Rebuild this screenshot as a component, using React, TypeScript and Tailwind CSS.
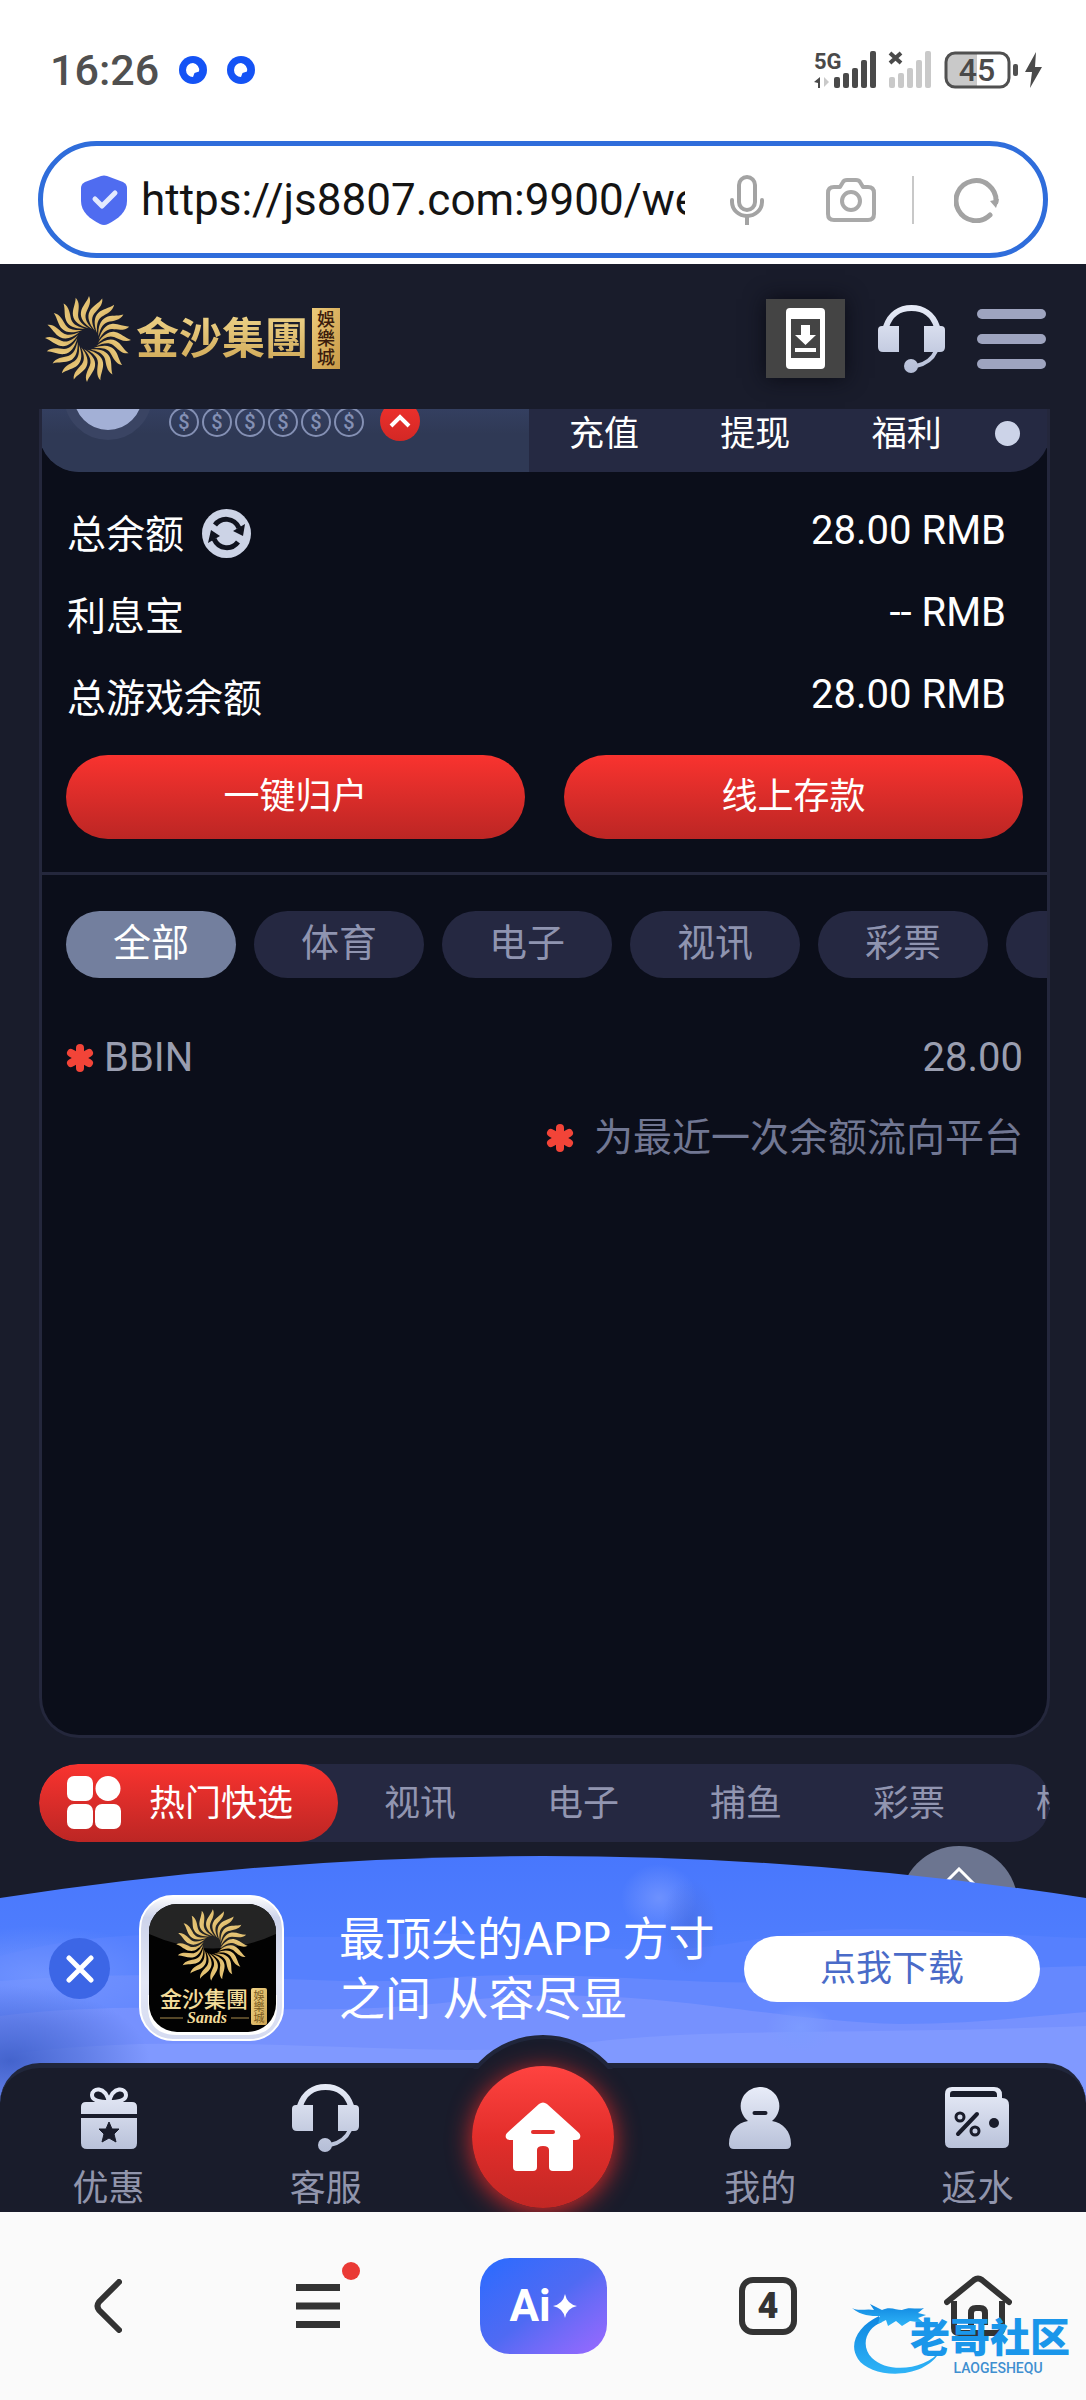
import { useState } from "react";

const CATEGORIES = ["全部", "体育", "电子", "视讯", "彩票", "棋牌"];

const QUICK_TABS = ["视讯", "电子", "捕鱼", "彩票", "棋牌"];

const BALANCES = [
    { label: "总余额", value: "28.00 RMB", refresh: true },
    { label: "利息宝", value: "-- RMB", refresh: false },
    { label: "总游戏余额", value: "28.00 RMB", refresh: false },
];

const SUN_RAYS = Array.from({ length: 20 }, (_, i) => i * 18);

// shared silver gradient for the site icons
function SilverDefs() {
    return (
        <svg className="absolute h-0 w-0" aria-hidden="true">
            <defs>
                <linearGradient
                    id="silver"
                    gradientUnits="userSpaceOnUse"
                    x1="0"
                    y1="0"
                    x2="0"
                    y2="68"
                >
                    <stop offset="0" stopColor="#e8ecf8" />
                    <stop offset="1" stopColor="#b4bdd6" />
                </linearGradient>
                <linearGradient id="gold" x1="0" y1="0" x2="1" y2="1">
                    <stop offset="0" stopColor="#f0d488" />
                    <stop offset="1" stopColor="#cfa450" />
                </linearGradient>
            </defs>
        </svg>
    );
}

function SunRays() {
    return (
        <g fill="url(#gold)">
            {SUN_RAYS.map((deg) => (
                <path
                    key={deg}
                    transform={`rotate(${deg})`}
                    d="M1 -43 C-1 -37 -6 -33 -7 -27 C-8 -21 -4 -15 4 -10 C0 -15 -4 -20 -2 -26 C0 -31 4 -37 1 -43 Z"
                />
            ))}
        </g>
    );
}

function HeadsetIcon() {
    return (
        <svg viewBox="0 0 67 68" className="h-[68px] w-[67px]">
            <path
                d="M8 22 C12 9 22 3 33.500 3 C45 3 55 9 59 22"
                fill="none"
                stroke="url(#silver)"
                strokeWidth="6"
            />
            <path
                d="M4 21 H21 V47 H5 Q0 47 0 42 V25 Q0 21 4 21 Z"
                fill="url(#silver)"
            />
            <path
                d="M46 21 H63 Q67 21 67 25 V42 Q67 47 62 47 H46 Z"
                fill="url(#silver)"
            />
            <path
                d="M58 46 C54 55 48 59 38 61"
                fill="none"
                stroke="url(#silver)"
                strokeWidth="4"
            />
            <circle cx="33" cy="61" r="7" fill="url(#silver)" />
        </svg>
    );
}

function GiftIcon() {
    return (
        <svg viewBox="0 0 56 62" className="h-[62px] w-14">
            <path
                d="M28 15 C24 15 11 15 11 8 C11 1 24 -2 28 15 C32 -2 45 1 45 8 C45 15 32 15 28 15 Z"
                fill="none"
                stroke="url(#silver)"
                strokeWidth="4"
            />
            <path
                d="M5 15 H51 Q56 15 56 20 V27 H0 V20 Q0 15 5 15 Z"
                fill="url(#silver)"
            />
            <path
                d="M0 31 H56 V56 Q56 62 50 62 H6 Q0 62 0 56 Z"
                fill="url(#silver)"
            />
            <path
                d="M28 35 L31 42 L38 42 L33 47 L35 55 L28 51 L21 55 L23 47 L18 42 L25 42 Z"
                fill="#191c2b"
                stroke="#191c2b"
                strokeLinejoin="round"
            />
        </svg>
    );
}

function UserIcon() {
    return (
        <svg viewBox="0 0 62 62" className="h-[62px] w-[62px]">
            <path
                d="M31 0 A19 19 0 0 1 43 34 C54 36 62 44 62 57 Q62 62 57 62 H5 Q0 62 0 57 C0 44 8 36 19 34 A19 19 0 0 1 31 0 Z"
                fill="url(#silver)"
            />
            <path
                d="M25.500 26 H36.500"
                stroke="#191c2b"
                strokeWidth="4"
                strokeLinecap="round"
            />
        </svg>
    );
}

function WalletIcon() {
    return (
        <svg viewBox="0 0 64 61" className="h-[61px] w-16">
            <path
                d="M7 0 H49 Q57 0 57 8 V11 Q64 11 64 18 V55 Q64 61 58 61 H6 Q0 61 0 55 V7 Q0 0 7 0 Z"
                fill="url(#silver)"
            />
            <path d="M8 4 H48 Q52 4 52 8 V10 H5 V7 Q5 4 8 4 Z" fill="#191c2b" />
            <g fill="none" stroke="#191c2b" strokeWidth="4" strokeLinecap="round">
                <path d="M32 27 L13 47" />
                <circle cx="15" cy="30" r="4" strokeWidth="3" />
                <circle cx="30" cy="44" r="4" strokeWidth="3" />
            </g>
            <circle cx="49" cy="36" r="5" fill="#191c2b" />
        </svg>
    );
}

function StarMark() {
    return (
        <svg viewBox="0 0 28 28" className="h-7 w-7" aria-hidden="true">
            <g stroke="#f24438" strokeWidth="8" strokeLinecap="round">
                <path d="M14 4 V24" />
                <path d="M5 9 L23 19" />
                <path d="M23 9 L5 19" />
            </g>
        </svg>
    );
}

function StatusBar() {
    return (
        <div className="flex h-[139px] items-center justify-between pr-11 pl-[50px]">
            <div className="flex items-center gap-5">
                <span className="text-[43px] leading-[48px] font-medium text-[#505050]">
                    16:26
                </span>
                {[0, 1].map((item) => (
                    <svg key={item} viewBox="0 0 28 28" className="h-7 w-7">
                        <circle cx="14" cy="14" r="14" fill="#1453f5" />
                        <path
                            d="M14 7 A7 7 0 1 0 14 21 L15.500 17 L20 15.500 A7 7 0 0 0 14 7 Z"
                            fill="#fff"
                        />
                    </svg>
                ))}
            </div>

            <div className="flex items-center gap-3">
                <svg viewBox="0 0 62 38" className="h-[38px] w-[62px] overflow-visible">
                    <text
                        x="0"
                        y="18"
                        fontSize="22"
                        fontWeight="700"
                        fill="#4a4a4a"
                    >
                        5G
                    </text>
                    <path d="M0 31 L6 26 V37 H4 V32 Z" fill="#4a4a4a" />
                    <path d="M10 26 L15 31 L10 36 Z" fill="#c9c9c9" />
                    <g fill="#4a4a4a">
                        <rect x="20" y="26" width="6" height="11" rx="2" />
                        <rect x="29" y="22" width="6" height="15" rx="2" />
                        <rect x="38" y="17" width="6" height="20" rx="2" />
                        <rect x="47" y="9" width="6" height="28" rx="2" />
                        <rect x="56" y="0" width="6" height="37" rx="2" />
                    </g>
                </svg>
                <svg viewBox="0 0 44 38" className="h-[38px] w-11">
                    <path
                        d="M2 2 L13 12 M13 2 L2 12"
                        stroke="#4a4a4a"
                        strokeWidth="4"
                    />
                    <g fill="#c9c9c9">
                        <rect x="1" y="26" width="6" height="11" rx="2" />
                        <rect x="10" y="22" width="6" height="15" rx="2" />
                        <rect x="19" y="17" width="6" height="20" rx="2" />
                        <rect x="28" y="9" width="6" height="28" rx="2" />
                        <rect x="37" y="0" width="6" height="37" rx="2" />
                    </g>
                </svg>
                <svg viewBox="0 0 98 38" className="h-[38px] w-[98px]">
                    <path d="M12 2 H33 V36 H12 Q2 36 2 26 V12 Q2 2 12 2 Z" fill="#c9c9c9" />
                    <rect
                        x="2"
                        y="2"
                        width="63"
                        height="34"
                        rx="9"
                        fill="none"
                        stroke="#505050"
                        strokeWidth="3"
                    />
                    <text
                        x="33"
                        y="30"
                        textAnchor="middle"
                        fontSize="32"
                        fontWeight="500"
                        fill="#4a4a4a"
                    >
                        45
                    </text>
                    <rect x="69" y="13" width="5" height="12" rx="2" fill="#505050" />
                    <path d="M92 1 L81 21 H88 L86 37 L98 16 H91 Z" fill="#4a4a4a" />
                </svg>
            </div>
        </div>
    );
}

function AddressBar() {
    return (
        <div className="px-[38px] pt-0.5 pb-1.5">
            <div className="flex h-[117px] items-center rounded-full border-5 border-[#2f6ddb] pr-[43px] pl-[38px]">
                <svg viewBox="0 0 46 50" className="h-[50px] w-[46px] shrink-0">
                    <path
                        d="M20 1 Q23 0 26 1 L42 7 Q46 9 46 13 V26 C46 37 37 44 27 49 Q23 51 19 49 C9 44 0 37 0 26 V13 Q0 9 4 7 Z"
                        fill="#4f6cf0"
                    />
                    <path
                        d="M14 24 L21 31 L34 18"
                        fill="none"
                        stroke="#e3eafe"
                        strokeWidth="5"
                        strokeLinecap="round"
                        strokeLinejoin="round"
                    />
                </svg>
                <input
                    type="text"
                    aria-label="网址"
                    defaultValue="https://js8807.com:9900/web"
                    className="ml-3.5 h-16 min-w-0 flex-1 bg-transparent text-[44px] text-[#141414] outline-none"
                />
                <button type="button" aria-label="语音" className="ml-[45px]">
                    <svg
                        viewBox="0 0 34 50"
                        className="h-[50px] w-[34px]"
                        fill="none"
                        stroke="#a3a3a3"
                        strokeWidth="4"
                    >
                        <rect x="9" y="2" width="16" height="33" rx="8" />
                        <path d="M2 25 V27 A15 14 0 0 0 32 27 V25" strokeLinecap="round" />
                        <path d="M17 41 V50" />
                    </svg>
                </button>
                <button type="button" aria-label="拍照" className="ml-[62px]">
                    <svg
                        viewBox="0 0 50 44"
                        className="h-11 w-[50px]"
                        fill="none"
                        stroke="#a9a9a9"
                        strokeWidth="4"
                    >
                        <path
                            d="M8 9 H14 L17 4 Q18 2 21 2 H30 Q33 2 34 4 L37 9 H42 Q48 9 48 15 V36 Q48 42 42 42 H8 Q2 42 2 36 V15 Q2 9 8 9 Z"
                            strokeLinejoin="round"
                        />
                        <circle cx="25" cy="23" r="9" />
                    </svg>
                </button>
                <span className="ml-9 h-12 w-0.5 bg-[#c8c8c8]" />
                <button type="button" aria-label="刷新" className="ml-10">
                    <svg viewBox="0 0 46 46" className="h-[46px] w-[46px]">
                        <path
                            d="M36 38 A20 20 0 1 1 42 25"
                            fill="none"
                            stroke="#a3a3a3"
                            strokeWidth="5"
                            strokeLinecap="round"
                        />
                        <path d="M36 24 L45 22 L42 31 Z" fill="#a3a3a3" />
                    </svg>
                </button>
            </div>
        </div>
    );
}

function SiteHeader() {
    return (
        <header className="flex h-[145px] items-center justify-between pt-1 pr-10 pl-[44px]">
            <a href="#" className="flex items-center gap-1" aria-label="金沙集團">
                <svg viewBox="-44 -44 88 88" className="h-[88px] w-[88px]">
                    <SunRays />
                </svg>
                <span className="bg-gradient-to-b from-[#f0d68c] to-[#cda552] bg-clip-text text-[43px] leading-[60px] font-bold text-transparent">
                    金沙集團
                </span>
                <span className="flex w-7 flex-col items-center bg-gradient-to-br from-[#ecca7a] to-[#c99a45] py-0.5 text-[18px] leading-[19px] font-medium text-[#3a1c0c]">
                    <span>娛</span>
                    <span>樂</span>
                    <span>城</span>
                </span>
            </a>

            <div className="flex items-center">
                <button
                    type="button"
                    aria-label="下载"
                    className="flex h-[79px] w-[79px] items-center justify-center bg-[#444444] shadow-[0_0_20px_#0a0b14]"
                >
                    <svg viewBox="0 0 39 61" className="h-[61px] w-[39px]">
                        <path
                            fillRule="evenodd"
                            d="M4 0 H35 Q39 0 39 4 V57 Q39 61 35 61 H4 Q0 61 0 57 V4 Q0 0 4 0 Z M5 11 V50 H34 V11 Z"
                            fill="#fff"
                        />
                        <path
                            d="M15 17 H24 V27 H30 L19.500 37 L9 27 H15 Z M9 40 H30 V44 H9 Z"
                            fill="#fff"
                        />
                    </svg>
                </button>
                <button type="button" aria-label="客服" className="ml-[33px]">
                    <HeadsetIcon />
                </button>
                <button
                    type="button"
                    aria-label="菜单"
                    className="ml-8 flex w-[69px] flex-col gap-[15px]"
                >
                    <span className="h-2.5 w-full rounded-full bg-[#9ea4bf]" />
                    <span className="h-2.5 w-full rounded-full bg-[#9ea4bf]" />
                    <span className="h-2.5 w-full rounded-full bg-[#9ea4bf]" />
                </button>
            </div>
        </header>
    );
}

function MemberBar() {
    return (
        <div className="-mx-[3px] flex h-[63px] overflow-hidden rounded-b-[40px] bg-[#252942]">
            <div className="flex w-[490px] items-end bg-gradient-to-b from-[#343f60] to-[#2f3955] to-40% pl-[25px]">
                <span className="mb-8 h-[88px] w-[88px] shrink-0 rounded-full border-10 border-[#3a4463] bg-[#a3b0d6]" />
                <span className="mb-[35px] ml-[17px] flex gap-[3px]">
                    {[1, 2, 3, 4, 5, 6].map((level) => (
                        <span
                            key={level}
                            className="flex h-[30px] w-[30px] items-center justify-center rounded-full border-2 border-[#8490b4] text-[20px] leading-none font-medium text-[#8490b4]"
                        >
                            $
                        </span>
                    ))}
                </span>
                <button
                    type="button"
                    aria-label="收起"
                    className="mb-[31px] ml-4 flex h-10 w-10 items-center justify-center rounded-full bg-gradient-to-b from-[#f0312d] to-[#d32825]"
                >
                    <svg viewBox="0 0 22 14" className="h-3.5 w-[22px]">
                        <path
                            d="M2 12 L11 3 L20 12"
                            fill="none"
                            stroke="#fff"
                            strokeWidth="4"
                        />
                    </svg>
                </button>
            </div>
            <nav className="flex flex-1 items-end justify-between pr-[30px] pb-3 pl-10 text-[35px] leading-[50px] text-white">
                <a href="#">充值</a>
                <a href="#">提现</a>
                <a href="#">福利</a>
                <span className="mb-3.5 -ml-7 h-[25px] w-[25px] rounded-full bg-[#ccd3e8]" />
            </nav>
        </div>
    );
}

function Wallet() {
    const [category, setCategory] = useState("全部");

    return (
        <section className="mx-9 ml-[39px] flex flex-1 flex-col overflow-hidden rounded-b-[40px] border-x-3 border-b-3 border-[#24273c] bg-[#0b0e1a]">
            <MemberBar />

            <dl className="mt-5 px-[25px] text-white">
                {BALANCES.map((row) => (
                    <div
                        key={row.label}
                        className="flex h-[82px] items-center justify-between pr-4"
                    >
                        <dt className="flex items-center gap-[18px] text-[39px] leading-[56px]">
                            <span className="pt-1">{row.label}</span>
                            {row.refresh && (
                                <button type="button" aria-label="刷新余额">
                                    <svg viewBox="0 0 49 49" className="h-[49px] w-[49px]">
                                        <circle cx="24.500" cy="24.500" r="24.500" fill="#ccd3e6" />
                                        <g fill="none" stroke="#10131f" strokeWidth="5">
                                            <path d="M13 16 C19 8 32 8 37 19" />
                                            <path d="M36 33 C30 41 17 41 12 30" />
                                        </g>
                                        <path
                                            d="M31 22 L43 15 L41 27 Z M18 27 L6 34 L9 21 Z"
                                            fill="#10131f"
                                        />
                                    </svg>
                                </button>
                            )}
                        </dt>
                        <dd className="pb-1 text-[40px] leading-[48px]">{row.value}</dd>
                    </div>
                ))}
            </dl>

            <div className="mt-[17px] flex gap-[39px] px-6 text-[36px] text-white">
                <button
                    type="button"
                    className="h-[84px] flex-1 rounded-full bg-gradient-to-b from-[#f9332f] to-[#bc2624]"
                >
                    一键归户
                </button>
                <button
                    type="button"
                    className="h-[84px] flex-1 rounded-full bg-gradient-to-b from-[#f9332f] to-[#bc2624]"
                >
                    线上存款
                </button>
            </div>

            <div className="mt-[33px] border-t-3 border-[#24273c] pt-9">
                <div className="flex gap-[18px] overflow-hidden pl-6 text-[38px] leading-[56px]">
                    {CATEGORIES.map((name) => (
                        <button
                            key={name}
                            type="button"
                            onClick={() => setCategory(name)}
                            className={
                                name === category
                                    ? "h-[67px] w-[170px] shrink-0 rounded-full bg-[#737f9e] pb-1 text-white"
                                    : "h-[67px] w-[170px] shrink-0 rounded-full bg-[#252841] pb-1 text-[#8f94b0]"
                            }
                        >
                            {name}
                        </button>
                    ))}
                </div>
            </div>

            <div className="mt-[52px] flex items-center justify-between px-6 text-[40px] leading-[56px] text-[#9a9eb0]">
                <span className="flex items-center gap-2.5">
                    <StarMark />
                    BBIN
                </span>
                <span>28.00</span>
            </div>
            <p className="mt-6 flex items-center justify-end gap-5 px-6 text-[39px] leading-[56px] text-[#717793]">
                <StarMark />
                为最近一次余额流向平台
            </p>
        </section>
    );
}

function QuickTabs() {
    return (
        <nav className="mx-9 mt-[26px] ml-[39px] flex h-[78px] overflow-hidden rounded-full bg-[#252841] text-[36px] leading-[52px]">
            <button
                type="button"
                className="flex w-[299px] shrink-0 items-center gap-7 rounded-full bg-gradient-to-b from-[#f9332f] to-[#bc2624] pl-7 text-white"
            >
                <svg viewBox="0 0 54 54" className="h-[54px] w-[54px]">
                    <g fill="#fff">
                        <rect x="0" y="0" width="26" height="25" rx="7" />
                        <circle cx="41" cy="12.500" r="12.500" />
                        <rect x="0" y="28" width="26" height="25" rx="7" />
                        <rect x="28" y="28" width="26" height="25" rx="7" />
                    </g>
                </svg>
                <span className="pt-0.5">热门快选</span>
            </button>
            <div className="flex min-w-0 flex-1 items-center gap-[91px] overflow-hidden pt-0.5 pl-[46px] text-[#9195b0]">
                {QUICK_TABS.map((name) => (
                    <button key={name} type="button" className="shrink-0">
                        {name}
                    </button>
                ))}
            </div>
        </nav>
    );
}

function AppIcon() {
    return (
        <svg viewBox="0 0 145 147" className="h-[147px] w-[145px] shrink-0">
            <defs>
                <linearGradient id="frame" x1="0" y1="0" x2="0" y2="1">
                    <stop offset="0" stopColor="#ffffff" />
                    <stop offset="0.15" stopColor="#cdd3ea" />
                    <stop offset="0.6" stopColor="#e3e7f6" />
                    <stop offset="1" stopColor="#d4daf0" />
                </linearGradient>
                <clipPath id="tile">
                    <rect x="10" y="9" width="127" height="128" rx="28" />
                </clipPath>
            </defs>
            <rect x="1" y="1" width="143" height="144" rx="33" fill="url(#frame)" stroke="#fff" strokeWidth="2" />
            <path
                d="M9 100 V111 Q9 140 38 140 H109 Q138 140 138 111 V100 Z"
                fill="#fff"
            />
            <g clipPath="url(#tile)">
                <rect x="10" y="9" width="127" height="128" fill="#020202" />
                <path d="M10 9 H137 V39 Q74 68 10 39 Z" fill="#242424" />
                <g transform="translate(73 50) scale(0.83)">
                    <SunRays />
                </g>
                <text x="21" y="112" fontSize="22" fontWeight="500" fill="#f3dc9a">
                    金沙集團
                </text>
                <path d="M21 123 H44 M92 123 H110" stroke="#a88b4c" strokeWidth="1" />
                <text
                    x="68"
                    y="128"
                    textAnchor="middle"
                    fontSize="16"
                    fontWeight="700"
                    fontStyle="italic"
                    fontFamily="Liberation Serif, serif"
                    fill="#f3dc9a"
                >
                    Sands
                </text>
                <rect x="112" y="93" width="16" height="37" rx="2" fill="url(#gold)" />
                <g fontSize="11" textAnchor="middle" fill="#7a5a22">
                    <text x="120" y="105">娛</text>
                    <text x="120" y="116">樂</text>
                    <text x="120" y="127">城</text>
                </g>
            </g>
        </svg>
    );
}

function DownloadBanner() {
    return (
        <div className="relative mt-3.5 h-[247px]">
            <button
                type="button"
                aria-label="回到顶部"
                className="absolute -top-2.5 right-[68px] flex h-[118px] w-[118px] justify-center rounded-full bg-[#6c7590] pt-[21px]"
            >
                <svg viewBox="0 0 36 20" className="h-5 w-9">
                    <path d="M2 18 L18 2 L34 18" fill="none" stroke="#fff" strokeWidth="3" />
                </svg>
            </button>
            <svg
                viewBox="0 0 1086 247"
                preserveAspectRatio="none"
                className="absolute inset-0 h-full w-full"
                aria-hidden="true"
            >
                <defs>
                    <linearGradient id="sky" x1="0" y1="0" x2="0" y2="1">
                        <stop offset="0" stopColor="#4877fd" />
                        <stop offset="0.35" stopColor="#4f7dfd" />
                        <stop offset="1" stopColor="#7391fd" />
                    </linearGradient>
                    <radialGradient id="glow">
                        <stop offset="0" stopColor="#7c9bff" />
                        <stop offset="1" stopColor="#7c9bff" stopOpacity="0" />
                    </radialGradient>
                    <radialGradient id="shade">
                        <stop offset="0" stopColor="#4363cc" />
                        <stop offset="0.5" stopColor="#4a6ad4" stopOpacity="0.6" />
                        <stop offset="1" stopColor="#4a6ad4" stopOpacity="0" />
                    </radialGradient>
                    <clipPath id="dome">
                        <path d="M0 42 Q543 -42 1086 42 V247 H0 Z" />
                    </clipPath>
                </defs>
                <g clipPath="url(#dome)">
                    <rect width="1086" height="247" fill="url(#sky)" />
                    <path
                        d="M0 100 C150 60 260 90 400 78 C540 72 600 110 740 86 C880 60 980 80 1086 82 V247 H0 Z"
                        fill="#5680fe"
                    />
                    <path
                        d="M0 125 C200 110 300 130 420 124 C560 110 660 130 800 126 C900 120 1000 112 1086 110 V247 H0 Z"
                        fill="#6588fe"
                    />
                    <path
                        d="M0 160 C150 140 300 165 460 145 C640 125 760 165 900 168 C980 168 1030 160 1086 156 V247 H0 Z"
                        fill="#7691fe"
                    />
                    <path
                        d="M0 200 C180 170 420 205 560 190 C700 170 820 180 1086 170 V247 H0 Z"
                        fill="#8099ff"
                    />
                    <ellipse cx="659" cy="42" rx="38" ry="34" fill="url(#glow)" opacity="0.7" />
                    <ellipse cx="690" cy="70" rx="28" ry="48" fill="url(#shade)" opacity="0.4" />
                    <ellipse cx="40" cy="120" rx="130" ry="50" fill="url(#glow)" opacity="0.7" />
                    <ellipse cx="10" cy="205" rx="140" ry="75" fill="url(#shade)" />
                    <ellipse cx="800" cy="172" rx="34" ry="24" fill="url(#glow)" />
                </g>
            </svg>

            <div className="relative flex items-center pt-[39px] pr-[46px] pl-[49px]">
                <button
                    type="button"
                    aria-label="关闭"
                    className="flex h-[61px] w-[61px] shrink-0 items-center justify-center rounded-full bg-[#3c66e6]"
                >
                    <svg viewBox="0 0 28 28" className="h-7 w-7">
                        <path
                            d="M3 3 L25 25 M25 3 L3 25"
                            stroke="#fff"
                            strokeWidth="5"
                            strokeLinecap="round"
                        />
                    </svg>
                </button>
                <span className="ml-[29px]">
                    <AppIcon />
                </span>
                <p className="ml-[55px] flex-1 text-[46px] leading-[60px] whitespace-nowrap text-white">
                    最顶尖的APP 方寸
                    <br />
                    之间 从容尽显
                </p>
                <a
                    href="#"
                    className="flex h-[66px] w-[296px] shrink-0 items-center justify-center rounded-full bg-white text-[36px] leading-[52px] text-[#4a6bc8]"
                >
                    点我下载
                </a>
            </div>
        </div>
    );
}

function TabBar() {
    return (
        <nav className="relative -mt-10">
            <div className="grid h-[149px] grid-cols-5 rounded-t-[40px] border-t-5 border-[#20263b] bg-[#191c2b] text-[36px] leading-[52px] text-[#9195ac]">
                <a href="#" className="flex flex-col items-center pt-[19px]">
                    <GiftIcon />
                    <span className="mt-3.5">优惠</span>
                </a>
                <a href="#" className="flex flex-col items-center pt-4">
                    <HeadsetIcon />
                    <span className="mt-[11px]">客服</span>
                </a>
                <span />
                <a href="#" className="flex flex-col items-center pt-[19px]">
                    <UserIcon />
                    <span className="mt-3.5">我的</span>
                </a>
                <a href="#" className="flex flex-col items-center pt-[19px]">
                    <WalletIcon />
                    <span className="mt-[15px]">返水</span>
                </a>
            </div>
            {/* raised hump behind the home button */}
            <div className="absolute inset-x-0 -top-7 flex h-[34px] justify-center overflow-hidden">
                <span className="h-[178px] w-[178px] shrink-0 rounded-full border-4 border-[#20263b] bg-[#191c2b]" />
            </div>
            <div className="pointer-events-none absolute inset-x-0 -top-7 bottom-0 flex justify-center overflow-hidden pt-[31px]">
                <a
                    href="#"
                    aria-label="首页"
                    className="pointer-events-auto flex h-[142px] w-[142px] items-center justify-center rounded-full bg-gradient-to-b from-[#ff4340] via-[#e32e2b] to-[#c22724] shadow-[0_4px_24px_#d92a28]"
                >
                    <svg viewBox="0 0 76 70" className="h-[70px] w-[76px]">
                        <path
                            d="M34 2 Q38 -1 42 2 L74 31 Q76 33 75 36 Q74 38 71 38 H68 V65 Q68 69 64 69 H48 Q44 69 44 65 V48 Q44 44 38 44 Q32 44 32 48 V65 Q32 69 28 69 H12 Q8 69 8 65 V38 H5 Q2 38 1 36 Q0 33 2 31 Z"
                            fill="#fff"
                        />
                        <path d="M28 30 H48" stroke="#e3302d" strokeWidth="4" strokeLinecap="round" />
                    </svg>
                </a>
            </div>
        </nav>
    );
}

function Watermark() {
    return (
        <div className="pointer-events-none absolute right-4 bottom-6 flex items-end">
            <svg viewBox="0 0 90 72" className="-mr-8 h-[72px] w-[90px]">
                <defs>
                    <linearGradient id="dragon" x1="0" y1="0" x2="0" y2="1">
                        <stop offset="0" stopColor="#0f86e0" />
                        <stop offset="1" stopColor="#2fb4f7" />
                    </linearGradient>
                </defs>
                <path
                    d="M27 12 C6 22 -4 40 6 55 C18 74 72 78 89 46 C74 66 36 70 20 54 C8 42 14 24 30 18 Z"
                    fill="url(#dragon)"
                />
                <path
                    d="M0 4 C8 8 14 4 22 6 L18 0 L30 6 C38 2 44 6 50 6 C58 2 64 6 72 4 L66 9 L74 11 L66 14 L72 19 L58 17 L50 22 L44 17 L36 22 L34 16 L26 20 L28 12 C18 12 10 12 0 4 Z"
                    fill="url(#dragon)"
                />
            </svg>
            <div className="flex flex-col items-center">
                <span className="text-[40px] leading-[42px] font-black text-[#1a96ea]">
                    老哥社区
                </span>
                <span className="pl-4 text-[14px] leading-4 font-medium text-[#3f8fd0]">
                    LAOGESHEQU
                </span>
            </div>
        </div>
    );
}

function BrowserBar() {
    return (
        <footer className="relative z-10 grid h-[188px] grid-cols-[216fr_204fr_246fr_204fr_216fr] items-center justify-items-center bg-[#fafafa]">
            <button type="button" aria-label="后退">
                <svg viewBox="0 0 28 54" className="h-[54px] w-7">
                    <path
                        d="M25 3 L5 23 Q2 27 5 31 L25 51"
                        fill="none"
                        stroke="#333"
                        strokeWidth="6"
                        strokeLinecap="round"
                    />
                </svg>
            </button>
            <button type="button" aria-label="菜单" className="relative">
                <svg viewBox="0 0 44 44" className="h-11 w-11">
                    <path d="M0 3.500 H44 M0 22 H44 M0 40.500 H44" stroke="#333" strokeWidth="7" />
                </svg>
                <span className="absolute -top-[22px] -right-5 h-[18px] w-[18px] rounded-full bg-[#ea3a35]" />
            </button>
            <button
                type="button"
                className="flex h-24 w-[127px] items-center justify-center gap-0.5 rounded-[30px] bg-gradient-to-br from-[#256bff] via-[#4f6af3] to-[#9a68ff] text-[44px] leading-none font-bold text-white"
            >
                Ai
                <svg viewBox="0 0 24 24" className="h-6 w-6">
                    <path d="M12 0 Q14 10 24 12 Q14 14 12 24 Q10 14 0 12 Q10 10 12 0 Z" fill="#fff" />
                </svg>
            </button>
            <button
                type="button"
                className="flex h-[58px] w-[58px] items-center justify-center rounded-[14px] border-6 border-[#333] text-[36px] leading-none font-black text-[#333]"
            >
                4
            </button>
            <button type="button" aria-label="主页">
                <svg
                    viewBox="0 0 68 62"
                    className="h-[62px] w-[68px]"
                    fill="none"
                    stroke="#333"
                    strokeWidth="6"
                >
                    <path d="M3 27 L30 5 Q34 2 38 5 L65 27" strokeLinecap="round" />
                    <path d="M10 26 V53 Q10 58 15 58 H53 Q58 58 58 53 V26" />
                    <path d="M27 50 V38 Q27 33 32 33 H36 Q41 33 41 38 V50" />
                </svg>
            </button>
            <Watermark />
        </footer>
    );
}

export default function App() {
    return (
        <div className="flex min-h-screen flex-col bg-[#191c2b] font-['Roboto','Noto_Sans_CJK_SC',sans-serif]">
            <SilverDefs />
            <div className="bg-white">
                <StatusBar />
                <AddressBar />
            </div>
            <SiteHeader />
            <Wallet />
            <QuickTabs />
            <DownloadBanner />
            <TabBar />
            <BrowserBar />
        </div>
    );
}
